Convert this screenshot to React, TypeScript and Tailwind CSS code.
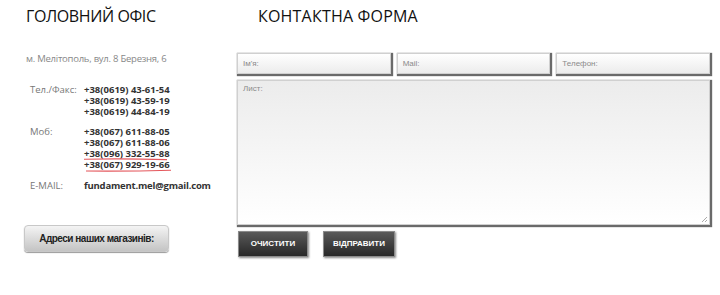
import React from "react";

const heading = "font-['Open_Sans',sans-serif] text-[16px] leading-none text-[#111]";

const phones = {
  tel: ["+38(0619) 43-61-54", "+38(0619) 43-59-19", "+38(0619) 44-84-19"],
  mob: ["+38(067) 611-88-05", "+38(067) 611-88-06", "+38(096) 332-55-88", "+38(067) 929-19-66"],
};

function InfoRow({ label, children }: { label: string; children: React.ReactNode }) {
  return (
    <div className="flex">
      <div className="w-[54px] text-[#777] font-normal">{label}</div>
      <div className="flex flex-col font-bold text-[#333]">{children}</div>
    </div>
  );
}

function Field({ placeholder }: { placeholder: string }) {
  return (
    <div className="h-[21px] flex-1 border border-[#d0d0d0] bg-gradient-to-b from-white to-[#ececec] shadow-[1px_1px_1px_1px_#6a6a6a] pl-[5px] pt-[6px] font-['Liberation_Sans',sans-serif] text-[8px] leading-none text-[#8a8a8a]">
      {placeholder}
    </div>
  );
}

function DarkButton({ label, width }: { label: string; width: string }) {
  return (
    <button
      className={`${width} h-[26px] border border-[#8a8a8a] bg-gradient-to-b from-[#5a5a5a] to-[#282828] shadow-[1px_1px_2px_#888] text-center font-['Liberation_Sans',sans-serif] text-[8px] font-bold text-white`}
    >
      {label}
    </button>
  );
}

export default function App() {
  return (
    <div className="flex h-[295px] w-[720px] bg-white">
      {/* левая колонка */}
      <div className="w-[232px] pl-[26px] pt-[8px]">
        <h2 className={`${heading} tracking-[-0.4px]`}>ГОЛОВНИЙ ОФІС</h2>
        <p className="mt-[30px] font-['Open_Sans',sans-serif] text-[9.5px] leading-none tracking-[-0.25px] text-[#888]">
          м. Мелітополь, вул. 8 Березня, 6
        </p>
        <div className="mt-[20px] ml-[4px] flex flex-col gap-[9px] font-['Open_Sans',sans-serif] text-[9.5px] leading-[11px]">
          <InfoRow label="Тел./Факс:">
            {phones.tel.map((p) => (
              <span key={p}>{p}</span>
            ))}
          </InfoRow>
          <InfoRow label="Моб:">
            {phones.mob.map((p, i) => (
              <span key={p} className="relative">
                {p}
                {i === 2 && (
                  <svg className="absolute left-0 top-[9px]" width="86" height="5" viewBox="0 0 86 5">
                    <path d="M0 2.2 Q40 1.4 83 2.6" stroke="#e4575c" strokeWidth="1.1" fill="none" />
                  </svg>
                )}
                {i === 3 && (
                  <svg className="absolute left-0 top-[9px]" width="90" height="6" viewBox="0 0 90 6">
                    <path d="M2 3 Q45 3.4 87 2.2" stroke="#e4575c" strokeWidth="1.1" fill="none" />
                  </svg>
                )}
              </span>
            ))}
          </InfoRow>
          <div className="mt-[1px]">
            <InfoRow label="E-MAIL:">
              <span className="tracking-[-0.2px]">fundament.mel@gmail.com</span>
            </InfoRow>
          </div>
        </div>
        <button className="mt-[34px] -ml-[2px] h-[27px] w-[145px] rounded-[4px] border border-[#c8c8c8] bg-gradient-to-b from-[#f4f4f4] to-[#c4c4c4] shadow-[0_1px_1px_#999] font-['Liberation_Sans',sans-serif] text-[10px] font-bold tracking-[-0.5px] text-[#222]">
          Адреси наших магазинів:
        </button>
      </div>

      {/* форма */}
      <div className="flex-1 pt-[8px] pr-[10px]">
        <h2 className={`${heading} ml-[26px] tracking-[0.2px]`}>КОНТАКТНА ФОРМА</h2>
        <div className="mt-[29px] ml-[5px] flex flex-col">
          <div className="flex gap-[6px]">
            <Field placeholder="Ім'я:" />
            <Field placeholder="Mail:" />
            <Field placeholder="Телефон:" />
          </div>
          <div className="relative mt-[6px] h-[145px] border border-[#d0d0d0] bg-gradient-to-b from-[#ececec] to-white shadow-[1px_1px_1px_1px_#6a6a6a] pl-[5px] pt-[4px] font-['Liberation_Sans',sans-serif] text-[8px] leading-none text-[#8a8a8a]">
            Лист:
            <svg className="absolute bottom-[1px] right-[1px]" width="7" height="7" viewBox="0 0 7 7">
              <path d="M6 1 L1 6 M6 4 L4 6" stroke="#aaa" strokeWidth="1" />
            </svg>
          </div>
          <div className="mt-[6px] flex gap-[15px] pl-[1px]">
            <DarkButton label="ОЧИСТИТИ" width="w-[70px]" />
            <DarkButton label="ВІДПРАВИТИ" width="w-[72px]" />
          </div>
        </div>
      </div>
    </div>
  );
}
